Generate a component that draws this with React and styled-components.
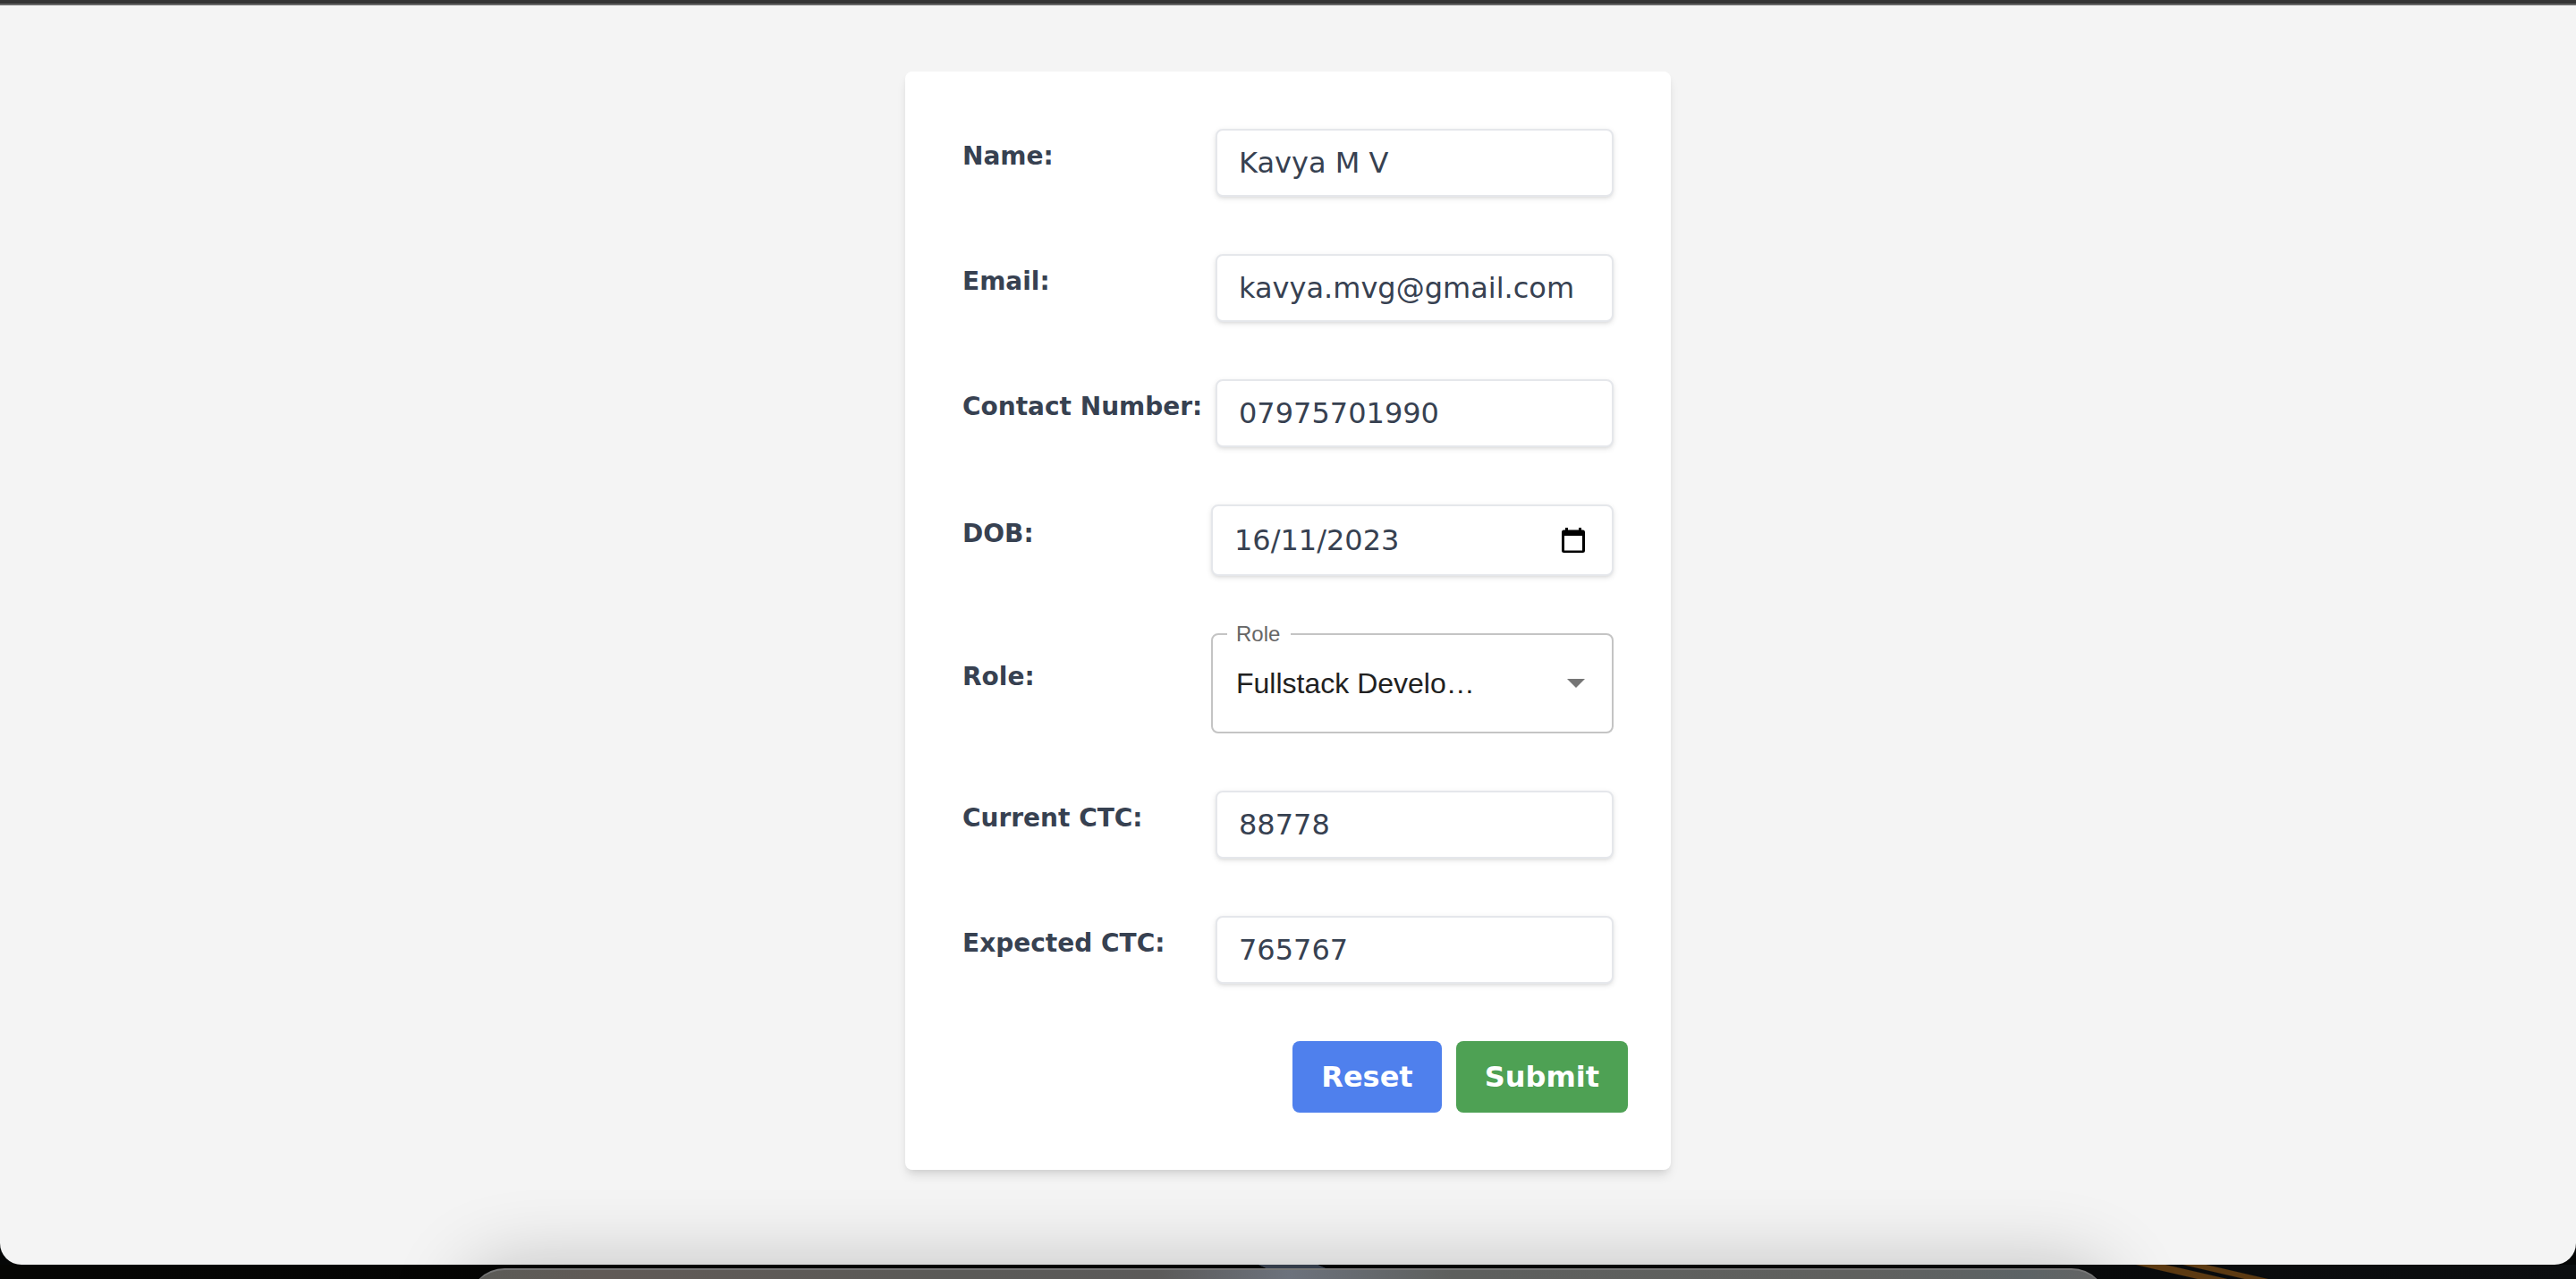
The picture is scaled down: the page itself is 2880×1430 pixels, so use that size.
import React, { useState } from "react";
import styled, { createGlobalStyle, css } from "styled-components";

const GlobalStyle = createGlobalStyle`
  *, *::before, *::after { box-sizing: border-box; }
  body { margin: 0; background: #060707; }
`;

const sans = `Verdana, "DejaVu Sans", sans-serif`;
const plain = `Helvetica, "Liberation Sans", Arial, sans-serif`;

const Screen = styled.div`
  display: flex;
  flex-direction: column;
  min-height: 100vh;
  overflow: hidden;
  background: #060707;
  font-family: ${sans};
`;

const TopEdge = styled.div`
  flex: none;
  height: 6px;
  background: #353535;
  border-bottom: 2px solid #666666;
`;

const Page = styled.main`
  flex: 1;
  display: flex;
  justify-content: center;
  align-items: flex-start;
  padding: 74px 32px;
  background: #f4f4f4;
  border-radius: 0 0 24px 24px;
`;

const Desktop = styled.footer`
  flex: none;
  display: flex;
  justify-content: center;
  height: 16px;
  padding-top: 4px;
  background:
    linear-gradient(24deg, transparent 12%, #3c4554 14%, #3c4554 87%, transparent 89%) calc(50% + 4px) 0 / 80px 4px no-repeat,
    linear-gradient(13deg, transparent 29%, #5c3a12 31%, #5c3a12 43%, transparent 45%, transparent 51%, #5c3a12 53%, #5c3a12 62%, transparent 64%) 88% 0 / 170px 16px no-repeat,
    linear-gradient(90deg, #060604, #040504 50%, #0c0e10);
`;

const Dock = styled.div`
  flex: none;
  width: 64%;
  max-width: 1832px;
  height: 140px;
  border-top: 2px solid #777777;
  border-radius: 40px;
  background: linear-gradient(90deg, #5b5b57, #605a56 8%, #5a5a57 30%, #5b5a59 42%, #6c727c 50%, #5d5f5d 60%, #5f605e 85%, #5c6365 95%, #646464);
  box-shadow: 0 0 88px rgba(0, 0, 0, 0.24);
`;

const Card = styled.form`
  display: flex;
  flex-direction: column;
  gap: 64px;
  width: 100%;
  max-width: 856px;
  padding: 64px;
  background: #ffffff;
  border-radius: 8px;
  box-shadow: 0 8px 12px -2px rgba(0, 0, 0, 0.1), 0 4px 8px -4px rgba(0, 0, 0, 0.1);
`;

const Row = styled.div`
  display: flex;
  align-items: center;
  justify-content: space-between;
`;

const Label = styled.label`
  padding-bottom: 14px;
  color: #374151;
  font-size: 28px;
  font-weight: 700;
  line-height: 40px;
  white-space: nowrap;
`;

const frame = css`
  border: 2px solid #e5e7eb;
  border-radius: 8px;
  background: #ffffff;
  box-shadow: 0 2px 6px rgba(0, 0, 0, 0.1), 0 2px 4px -2px rgba(0, 0, 0, 0.1);
`;

const inputText = css`
  color: #374151;
  font-family: ${sans};
  font-size: 32px;
  line-height: 40px;
`;

const TextInput = styled.input`
  ${frame}
  ${inputText}
  width: 445px;
  height: 76px;
  padding: 16px 24px;
`;

const DateBox = styled.div`
  ${frame}
  display: flex;
  align-items: center;
  width: 450px;
  height: 80px;
  padding: 0 30px 0 24px;
`;

const DateInput = styled.input`
  ${inputText}
  flex: 1;
  min-width: 0;
  padding: 0;
  border: 0;
  outline: 0;
  background: transparent;
`;

const IconButton = styled.button`
  display: flex;
  padding: 0;
  border: 0;
  background: transparent;
  cursor: pointer;
`;

const SelectBox = styled.fieldset`
  display: flex;
  align-items: center;
  width: 450px;
  min-width: 0;
  margin: -12px 0 0;
  padding: 0 30px 12px 16px;
  height: 124px;
  border: 2px solid #c4c4c4;
  border-radius: 8px;
`;

const Legend = styled.legend`
  padding: 0 12px 0 10px;
  color: #666666;
  font-family: ${plain};
  font-size: 24px;
  line-height: 26px;
`;

const RoleSelect = styled.select`
  appearance: none;
  flex: 1;
  min-width: 0;
  height: 100%;
  padding: 0 0 0 10px;
  border: 0;
  outline: 0;
  background: transparent;
  color: #212121;
  font-family: ${plain};
  font-size: 32px;
`;

const Arrow = styled.svg`
  flex: none;
  pointer-events: none;
`;

const Actions = styled.div`
  display: flex;
  justify-content: flex-end;
  gap: 16px;
  margin-right: -16px;
`;

const Button = styled.button`
  height: 80px;
  padding: 0 32px;
  border: 0;
  border-radius: 8px;
  background: ${(p) => p.$color};
  color: #ffffff;
  font-family: ${sans};
  font-size: 32px;
  font-weight: 700;
  cursor: pointer;
`;

const initial = {
  name: "Kavya M V",
  email: "kavya.mvg@gmail.com",
  contact: "07975701990",
  dob: "16/11/2023",
  role: "fullstack",
  current: "88778",
  expected: "765767",
};

function TextRow({ id, label, type = "text", value, onChange }) {
  return (
    <Row>
      <Label htmlFor={id}>{label}</Label>
      <TextInput id={id} type={type} value={value} onChange={onChange} />
    </Row>
  );
}

function CalendarIcon() {
  return (
    <svg width="26" height="28" viewBox="0 0 26 28" aria-hidden="true">
      <path
        fillRule="evenodd"
        d="M4 0h3v2.5h12V0h3v2.5h1.500a2.500 2.500 0 0 1 2.500 2.500v20.500a2.500 2.500 0 0 1-2.500 2.500h-21A2.500 2.500 0 0 1 0 25.500V5a2.500 2.500 0 0 1 2.500-2.500H4zM3 9v16.500h20V9z"
      />
    </svg>
  );
}

export default function App() {
  const [form, setForm] = useState(initial);
  const bind = (key) => ({
    id: key,
    value: form[key],
    onChange: (e) => setForm({ ...form, [key]: e.target.value }),
  });

  return (
    <Screen>
      <GlobalStyle />
      <TopEdge />
      <Page>
        <Card onSubmit={(e) => e.preventDefault()}>
          <TextRow label="Name:" {...bind("name")} />
          <TextRow label="Email:" type="email" {...bind("email")} />
          <TextRow label="Contact Number:" type="tel" {...bind("contact")} />
          <Row>
            <Label htmlFor="dob">DOB:</Label>
            <DateBox>
              <DateInput inputMode="numeric" {...bind("dob")} />
              <IconButton type="button" aria-label="Open calendar">
                <CalendarIcon />
              </IconButton>
            </DateBox>
          </Row>
          <Row>
            <Label htmlFor="role">Role:</Label>
            <SelectBox>
              <Legend>Role</Legend>
              <RoleSelect {...bind("role")}>
                <option value="fullstack">Fullstack Develo…</option>
              </RoleSelect>
              <Arrow width="20" height="10" viewBox="0 0 20 10" aria-hidden="true">
                <path d="M0 0l10 10L20 0z" fill="#757575" />
              </Arrow>
            </SelectBox>
          </Row>
          <TextRow label="Current CTC:" {...bind("current")} />
          <TextRow label="Expected CTC:" {...bind("expected")} />
          <Actions>
            <Button type="reset" $color="#4f80ed" onClick={() => setForm(initial)}>
              Reset
            </Button>
            <Button type="submit" $color="#4ea154">
              Submit
            </Button>
          </Actions>
        </Card>
      </Page>
      <Desktop>
        <Dock />
      </Desktop>
    </Screen>
  );
}
